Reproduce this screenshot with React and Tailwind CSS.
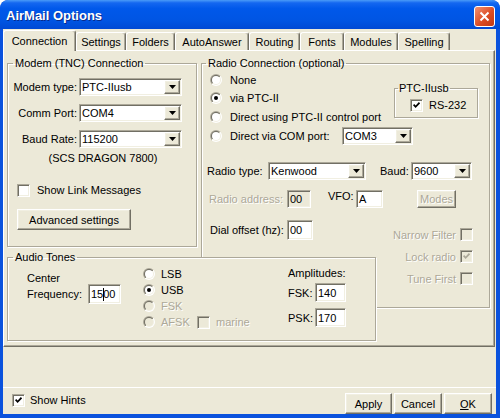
import React from 'react';

const sunken =
  'border border-t-[#aca899] border-l-[#aca899] border-r-white border-b-white shadow-[inset_1px_1px_0_#716f64,inset_-1px_-1px_0_#f1efe2]';
const raised =
  'border border-t-white border-l-white border-r-[#716f64] border-b-[#716f64] shadow-[inset_-1px_-1px_0_#aca899,inset_1px_1px_0_#f1efe2]';
const dim = 'text-[#aca899] [text-shadow:1px_1px_0_#fff]';
const group = 'border border-[#aca899] shadow-[1px_1px_0_#fff,inset_1px_1px_0_#fff]';

const Arrow = () => (
  <svg width="7" height="4" viewBox="0 0 7 4">
    <path d="M0 0h7L3.5 4z" fill="#000" />
  </svg>
);

const Combo = ({ className, value }) => (
  <div className={`${sunken} ${className} p-[1px] flex bg-white h-[18px] shrink-0`}>
    <div className="flex-1 flex items-center pl-[1px]">{value}</div>
    <div className={`${raised} w-[16px] h-full bg-[#ece9d8] flex items-center justify-center`}>
      <Arrow />
    </div>
  </div>
);

const TextBox = ({ className, children, disabled }) => (
  <div
    className={`${sunken} ${className} p-[1px] pl-[2px] flex items-center shrink-0 ${
      disabled ? 'bg-[#ece9d8]' : 'bg-white'
    }`}
  >
    {children}
  </div>
);

const Button = ({ className, children, disabled }) => (
  <div
    className={`${raised} ${className} bg-[#ece9d8] flex items-center justify-center shrink-0 ${
      disabled ? dim : ''
    }`}
  >
    {children}
  </div>
);

const Checkbox = ({ checked, disabled }) => (
  <div className={`${sunken} w-[13px] h-[13px] p-[1px] shrink-0`}>
    <div
      className={`w-full h-full flex items-center justify-center ${
        disabled ? 'bg-[#ece9d8]' : 'bg-white'
      }`}
    >
      {checked && (
        <svg width="7" height="7" viewBox="0 0 7 7">
          <path
            d="M0.6 2.6 L2.6 4.8 L6.5 0.7"
            fill="none"
            stroke={disabled ? '#aca899' : '#000'}
            strokeWidth="1.7"
          />
        </svg>
      )}
    </div>
  </div>
);

const Radio = ({ checked, disabled }) => (
  <svg width="12" height="12" viewBox="0 0 12 12" className="shrink-0">
    <defs>
      <linearGradient id="rOuter" x1="0" y1="0" x2="1" y2="1">
        <stop offset="0.5" stopColor="#aca899" />
        <stop offset="0.5" stopColor="#ffffff" />
      </linearGradient>
      <linearGradient id="rInner" x1="0" y1="0" x2="1" y2="1">
        <stop offset="0.5" stopColor="#716f64" />
        <stop offset="0.5" stopColor="#f1efe2" />
      </linearGradient>
    </defs>
    <circle cx="6" cy="6" r="6" fill="url(#rOuter)" />
    <circle cx="6" cy="6" r="5" fill="url(#rInner)" />
    <circle cx="6" cy="6" r="4" fill={disabled ? '#ece9d8' : '#fff'} />
    {checked && <circle cx="6" cy="6" r="2" fill={disabled ? '#aca899' : '#000'} />}
  </svg>
);

const tabs = [
  ['Connection', 'w-[73px]'],
  ['Settings', 'w-[50px]'],
  ['Folders', 'w-[49px]'],
  ['AutoAnswer', 'w-[74px]'],
  ['Routing', 'w-[51px]'],
  ['Fonts', 'w-[44px]'],
  ['Modules', 'w-[54px]'],
  ['Spelling', 'w-[52px]'],
];

const RadioRow = ({ label, checked, disabled, className = '' }) => (
  <div className={`flex items-center h-[18px] gap-[8px] ${className}`}>
    <Radio checked={checked} disabled={disabled} />
    <span className={disabled ? dim : ''}>{label}</span>
  </div>
);

const App = () => {
  return (
    <div className="w-[500px] h-[418px] bg-[#0a52dd] rounded-t-[8px] flex flex-col overflow-hidden [font-family:'Liberation_Sans',Arial,sans-serif] text-[11px] leading-[14px] text-black">
      {/* Title bar */}
      <div className="h-[29px] shrink-0 flex items-center justify-between pl-[6px] pr-[5px] pt-[3px] rounded-t-[8px] bg-[linear-gradient(180deg,#4a9bf8_0%,#1467f0_10%,#0058ea_30%,#0055e3_70%,#0049d4_100%)]">
        <span className="text-white font-bold text-[13px] [text-shadow:1px_1px_0_#0a2a8a]">AirMail Options</span>
        <div className="w-[21px] h-[21px] rounded-[3px] border border-white bg-[linear-gradient(135deg,#f29273,#dc4d25_55%,#c13812)] flex items-center justify-center">
          <svg width="11" height="11" viewBox="0 0 11 11">
            <path d="M1.5 1.5l8 8M9.5 1.5l-8 8" stroke="#fff" strokeWidth="2" />
          </svg>
        </div>
      </div>

      {/* Dialog body */}
      <div className="flex-1 ml-[3px] mr-[4px] mb-[4px] bg-[#ece9d8] flex flex-col">
        {/* Tabs */}
        <div className="flex items-end h-[21px] shrink-0">
          {tabs.map(([name, w], i) =>
            i === 0 ? (
              <div
                key={name}
                className={`${w} relative z-20 h-[21px] -mb-[1px] bg-[#ece9d8] border-t border-l border-r border-t-white border-l-white border-r-[#716f64] rounded-t-[3px] shadow-[inset_-1px_0_0_#aca899] flex justify-center pt-[3px]`}
              >
                {name}
              </div>
            ) : (
              <div
                key={name}
                className={`${w} h-[18px] border-t border-l border-r border-t-white border-l-white border-r-[#716f64] rounded-t-[3px] shadow-[inset_-1px_0_0_#aca899] flex justify-center pt-[2px]`}
              >
                {name}
              </div>
            )
          )}
        </div>

        {/* Tab panel */}
        <div className="h-[297px] shrink-0 mr-[1px] border border-t-white border-l-white border-r-[#716f64] border-b-[#716f64] shadow-[inset_-1px_-1px_0_#aca899] pt-[5px] pl-[3px]">
          <div className="flex items-start">
            {/* Modem group */}
            <fieldset className={`${group} w-[190px] h-[191px] shrink-0 min-w-0`}>
              <legend className="ml-[5px] px-[2px]">Modem (TNC) Connection</legend>
              <div className="flex flex-col gap-[8px] mt-[8px]">
                <div className="flex items-center">
                  <span className="w-[71px] text-right pr-[2px]">Modem type:</span>
                  <Combo className="w-[103px]" value="PTC-IIusb" />
                </div>
                <div className="flex items-center">
                  <span className="w-[71px] text-right pr-[2px]">Comm Port:</span>
                  <Combo className="w-[103px]" value="COM4" />
                </div>
                <div className="flex items-center">
                  <span className="w-[71px] text-right pr-[2px]">Baud Rate:</span>
                  <Combo className="w-[103px]" value="115200" />
                </div>
              </div>
              <div className="text-center mt-[3px] pl-[2px]">(SCS DRAGON 7800)</div>
              <div className="flex items-center mt-[18px] pl-[9px] gap-[7px]">
                <Checkbox />
                <span>Show Link Messages</span>
              </div>
              <Button className="ml-[9px] mt-[12px] w-[114px] h-[21px]">Advanced settings</Button>
            </fieldset>

            {/* Radio group */}
            <fieldset className={`${group} w-[289px] h-[252px] ml-[4px] shrink-0 min-w-0`}>
              <legend className="ml-[4px] px-[2px]">Radio Connection (optional)</legend>
              <div className="flex items-start mt-[1px]">
                <div className="flex flex-col pl-[8px]">
                  <RadioRow label="None" />
                  <RadioRow label="via PTC-II" checked />
                  <RadioRow label="Direct using PTC-II control port" className="mt-[1px]" />
                </div>
                <fieldset className={`${group} ml-auto mr-[11px] mt-[10px] w-[84px] h-[37px] min-w-0`}>
                  <legend className="ml-[3px] px-[1px]">PTC-IIusb</legend>
                  <div className="flex items-center pl-[15px] gap-[6px] mt-[3px]">
                    <Checkbox checked />
                    <span>RS-232</span>
                  </div>
                </fieldset>
              </div>
              <div className="flex items-center h-[18px] mt-[1px] pl-[8px]">
                <Radio />
                <span className="w-[112px] ml-[8px]">Direct via COM port:</span>
                <Combo className="w-[71px]" value="COM3" />
              </div>

              <div className="flex items-center h-[18px] mt-[17px] pl-[5px]">
                <span className="w-[61px]">Radio type:</span>
                <Combo className="w-[98px]" value="Kenwood" />
                <span className="w-[31px] ml-[14px]">Baud:</span>
                <Combo className="w-[61px]" value="9600" />
              </div>

              <div className="flex items-center h-[18px] mt-[10px] pl-[7px]">
                <span className={`w-[78px] ${dim}`}>Radio address:</span>
                <TextBox className="w-[24px] h-[18px]" disabled>
                  00
                </TextBox>
                <span className="w-[28px] ml-[17px] self-start leading-[13px]">VFO:</span>
                <TextBox className="w-[27px] h-[18px]">A</TextBox>
                <Button className="ml-[34px] w-[39px] h-[18px]" disabled>
                  Modes
                </Button>
              </div>

              <div className="flex items-start mt-[12px]">
                <div className="flex items-center pl-[8px]">
                  <span className="w-[77px]">Dial offset (hz):</span>
                  <TextBox className="w-[26px] h-[20px]">00</TextBox>
                </div>
                <div className="ml-auto mr-[16px] mt-[8px] flex flex-col items-end gap-[9px]">
                  <div className="flex items-center gap-[4px] h-[13px]">
                    <span className={dim}>Narrow Filter</span>
                    <Checkbox disabled />
                  </div>
                  <div className="flex items-center gap-[4px] h-[13px]">
                    <span className={dim}>Lock radio</span>
                    <Checkbox checked disabled />
                  </div>
                  <div className="flex items-center gap-[4px] h-[13px]">
                    <span className={dim}>Tune First</span>
                    <Checkbox disabled />
                  </div>
                </div>
              </div>
            </fieldset>
          </div>

          {/* Audio tones group */}
          <fieldset className={`${group} relative z-10 bg-[#ece9d8] w-[369px] h-[91px] -mt-[58px] min-w-0`}>
            <legend className="ml-[5px] px-[2px]">Audio Tones</legend>
            <div className="flex items-start">
              <div className="pl-[19px] mt-[8px] w-[113px] shrink-0">
                <div className="leading-[13px]">Center</div>
                <div className="flex items-center -mt-[1px]">
                  <span className="w-[61px]">Frequency:</span>
                  <TextBox className="w-[33px] h-[20px]">
                    15
                    <span className="inline-block w-px h-[13px] bg-black -mr-px" />
                    00
                  </TextBox>
                </div>
              </div>
              <div className="ml-[22px] mt-[2px] w-[145px] shrink-0 flex flex-col">
                <div className="flex items-center h-[16px] gap-[6px]">
                  <Radio />
                  <span>LSB</span>
                </div>
                <div className="flex items-center h-[16px] gap-[6px]">
                  <Radio checked />
                  <span>USB</span>
                </div>
                <div className="flex items-center h-[16px] gap-[6px]">
                  <Radio disabled />
                  <span className={dim}>FSK</span>
                </div>
                <div className="flex items-center h-[16px] gap-[6px]">
                  <Radio disabled />
                  <span className={`w-[30px] ${dim}`}>AFSK</span>
                  <Checkbox disabled />
                  <span className={dim}>marine</span>
                </div>
              </div>
              <div className="mt-[2px]">
                <div>Amplitudes:</div>
                <div className="flex items-center mt-[3px]">
                  <span className="w-[27px]">FSK:</span>
                  <TextBox className="w-[31px] h-[19px]">140</TextBox>
                </div>
                <div className="flex items-center mt-[6px]">
                  <span className="w-[27px]">PSK:</span>
                  <TextBox className="w-[31px] h-[19px]">170</TextBox>
                </div>
              </div>
            </div>
          </fieldset>
        </div>

        <div className="h-[40px] shrink-0" />

        {/* Bottom bar */}
        <div className="flex-1 border-t border-white flex items-start">
          <div className="flex items-center gap-[5px] ml-[9px] mt-[5px]">
            <Checkbox checked />
            <span>Show Hints</span>
          </div>
          <div className="ml-auto mr-[4px] mt-[5px] flex gap-[2px]">
            <Button className="w-[47px] h-[21px]">Apply</Button>
            <Button className="w-[48px] h-[21px]">Cancel</Button>
            <Button className="w-[48px] h-[21px]">
              <span>
                <span className="underline">O</span>K
              </span>
            </Button>
          </div>
        </div>
      </div>
    </div>
  );
};

export default App;
